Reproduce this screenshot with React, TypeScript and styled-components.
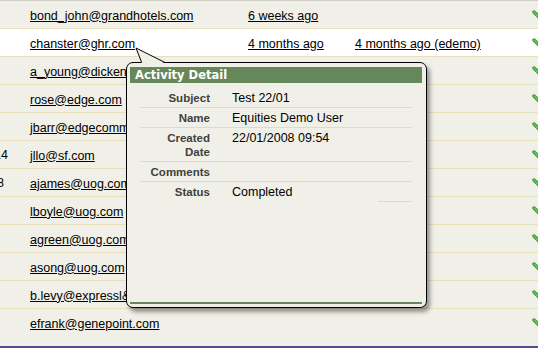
import React from "react";
import styled, { createGlobalStyle } from "styled-components";

const GlobalStyle = createGlobalStyle`
  html, body {
    margin: 0;
    padding: 0;
    background: #ffffff;
  }
  body {
    font-family: "Liberation Sans", Arial, sans-serif;
  }
`;

const Page = styled.div`
  position: relative;
  width: 538px;
  height: 354px;
  overflow: hidden;
  background: #ffffff;
`;

const List = styled.div`
  width: 552px;
  background: #f1f0e8;
  border-top: 1px solid #cfcec6;
  border-bottom: 2px solid #574a8f;
  padding-bottom: 9px;
`;

const Row = styled.div<{ $hover?: boolean; $last?: boolean }>`
  display: grid;
  grid-template-columns: 30px 218px 107px 177px 20px;
  align-items: center;
  height: 27px;
  background: ${(p) => (p.$hover ? "#ffffff" : "transparent")};
  border-bottom: 1px solid ${(p) => (p.$last ? "transparent" : "#e8e0bb")};
`;

const Lead = styled.div<{ $edge: number }>`
  display: flex;
  justify-content: flex-end;
  min-width: 0;
  padding-right: ${(p) => 30 - p.$edge}px;
  font-size: 12.5px;
  color: #000;
  white-space: nowrap;
`;

const Cell = styled.div`
  min-width: 0;
  white-space: nowrap;
`;

const Link = styled.a`
  color: #000;
  font-size: 12.5px;
  text-decoration: underline;
  cursor: pointer;
`;

const Check = styled.svg`
  display: block;
`;

const Popup = styled.div`
  position: absolute;
  left: 126px;
  top: 62px;
  width: 301px;
  height: 246px;
  box-sizing: border-box;
  display: flex;
  flex-direction: column;
  padding: 3px 4px 3px 3px;
  background: #f1f0e8;
  border: 1px solid #000;
  border-radius: 7px;
  box-shadow: 3px 4px 4px rgba(0, 0, 0, 0.4);
`;

const Tail = styled.svg`
  position: absolute;
  left: 7px;
  top: -17px;
  overflow: visible;
`;

const Panel = styled.div`
  flex: 1;
  display: flex;
  flex-direction: column;
  padding-top: 1px;
  border-bottom: 2px solid #66875a;
`;

const Header = styled.div`
  height: 16px;
  line-height: 16px;
  padding-left: 5px;
  background: #66875a;
  color: #fff;
  font-family: "DejaVu Sans", Verdana, sans-serif;
  font-weight: bold;
  font-size: 11.5px;
`;

const Details = styled.div`
  display: flex;
  flex-direction: column;
  margin: 5px 10px 0;
`;

const DetailRow = styled.div<{ $last?: boolean }>`
  display: grid;
  grid-template-columns: 80px 1fr;
  padding: 3px 0 2px;
  line-height: 14px;
  border-bottom: 1px solid ${(p) => (p.$last ? "transparent" : "#e4dcb4")};
`;

const Label = styled.div`
  text-align: right;
  padding-right: 10px;
  font-size: 11.5px;
  font-weight: bold;
  color: #404040;
`;

const Value = styled.div`
  padding-left: 12px;
  font-size: 12.5px;
  color: #000;
`;

const ShortRule = styled.div`
  align-self: flex-end;
  width: 34px;
  margin-top: -1px;
  border-top: 1px solid #e4dcb4;
`;

type Contact = {
  email: string;
  lead?: string;
  edge?: number;
  created?: string;
  modified?: string;
  hover?: boolean;
};

const contacts: Contact[] = [
  { email: "bond_john@grandhotels.com", created: "6 weeks ago" },
  { email: "chanster@ghr.com", created: "4 months ago", modified: "4 months ago (edemo)", hover: true },
  { email: "a_young@dickenson.com" },
  { email: "rose@edge.com" },
  { email: "jbarr@edgecomm.com" },
  { email: "jllo@sf.com", lead: "14", edge: 8 },
  { email: "ajames@uog.com", lead: "18", edge: 4 },
  { email: "lboyle@uog.com" },
  { email: "agreen@uog.com" },
  { email: "asong@uog.com" },
  { email: "b.levy@expressl&t.net" },
  { email: "efrank@genepoint.com" },
];

const details: { label: React.ReactNode; value: string }[] = [
  { label: "Subject", value: "Test 22/01" },
  { label: "Name", value: "Equities Demo User" },
  { label: <>Created<br />Date</>, value: "22/01/2008 09:54" },
  { label: "Comments", value: "" },
  { label: "Status", value: "Completed" },
];

// only the short arm of the tick shows inside the window, the rest is cut off
const CheckIcon = () => (
  <Check width="18" height="14" viewBox="0 0 18 14">
    <polyline points="2,4 7.5,9.5 17,1" fill="none" stroke="#3f8f34" strokeWidth="3.4" strokeLinecap="round" strokeLinejoin="round" />
    <polyline points="2,4 7.5,9.5 17,1" fill="none" stroke="#6cc35e" strokeWidth="1.6" strokeLinecap="round" strokeLinejoin="round" />
  </Check>
);

const App = () => {
  return (
    <Page>
      <GlobalStyle />
      <List>
        {contacts.map((c, i) => (
          <Row key={c.email} $hover={c.hover} $last={i === contacts.length - 1}>
            <Lead $edge={c.edge ?? 30}>{c.lead}</Lead>
            <Cell><Link>{c.email}</Link></Cell>
            <Cell>{c.created && <Link>{c.created}</Link>}</Cell>
            <Cell>{c.modified && <Link>{c.modified}</Link>}</Cell>
            <CheckIcon />
          </Row>
        ))}
      </List>

      {/* hover card for chanster@ghr.com */}
      <Popup>
        <Tail width="36" height="18" viewBox="0 0 36 18">
          <polygon points="2,2 7.7,17.6 31,17.6" fill="#f1f0e8" />
          <polyline points="7.7,16.5 2,2 31,16.5" fill="none" stroke="#000" strokeWidth="1" />
        </Tail>
        <Panel>
          <Header>Activity Detail</Header>
          <Details>
            {details.map((d, i) => (
              <DetailRow key={i} $last={i === details.length - 1}>
                <Label>{d.label}</Label>
                <Value>{d.value}</Value>
              </DetailRow>
            ))}
            <ShortRule />
          </Details>
        </Panel>
      </Popup>
    </Page>
  );
};

export default App;
